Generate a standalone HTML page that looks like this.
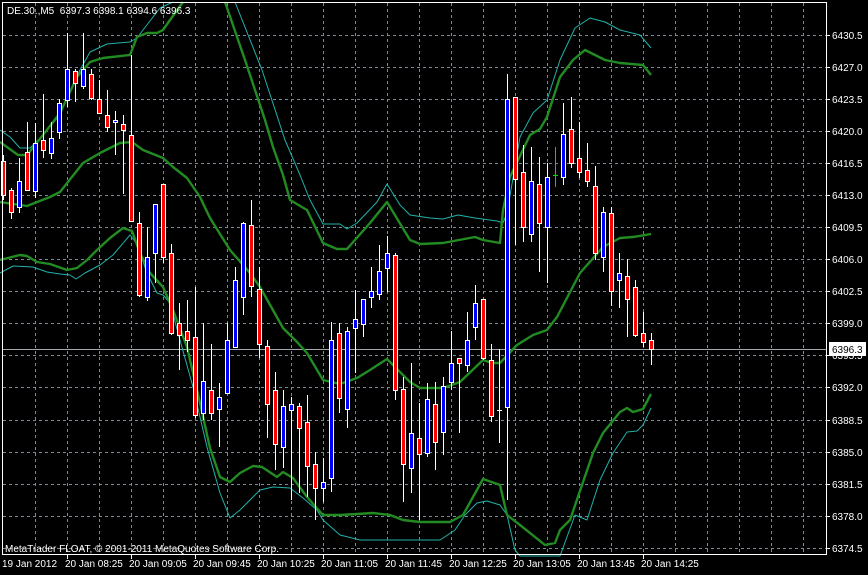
<!DOCTYPE html>
<html><head><meta charset="utf-8"><style>
html,body{margin:0;padding:0;background:#000;width:868px;height:575px;overflow:hidden}
svg{display:block}
text{font-family:"Liberation Sans",sans-serif;font-size:10px;fill:#fff}
</style></head><body>
<svg width="868" height="575" viewBox="0 0 868 575" xmlns="http://www.w3.org/2000/svg">
<rect width="868" height="575" fill="#000"/>
<g stroke="#778899" stroke-width="1" stroke-dasharray="3,3" fill="none" shape-rendering="crispEdges">
<path d="M3 35.5H826M3 67.5H826M3 99.5H826M3 131.5H826M3 163.5H826M3 195.5H826M3 227.5H826M3 259.5H826M3 291.5H826M3 323.5H826M3 355.5H826M3 387.5H826M3 420.5H826M3 452.5H826M3 484.5H826M3 516.5H826M3 548.5H826"/>
<path d="M35.5 3V554M67.5 3V554M99.5 3V554M131.5 3V554M163.5 3V554M195.5 3V554M227.5 3V554M259.5 3V554M291.5 3V554M323.5 3V554M355.5 3V554M387.5 3V554M419.5 3V554M451.5 3V554M483.5 3V554M515.5 3V554M547.5 3V554M579.5 3V554M611.5 3V554M643.5 3V554M675.5 3V554M707.5 3V554M739.5 3V554M771.5 3V554M803.5 3V554"/>
</g>
<line x1="3" y1="349.5" x2="826" y2="349.5" stroke="#a0a8b0" stroke-width="1"/>
<!-- bands -->
<g fill="none" stroke-linejoin="round">
<polyline stroke="#20b2aa" stroke-width="1" points="0,130 10,137 20,148 30,148 43,135 60,115 80,70 90,52 107,44 130,42 137,38 143,30 160,8 173,2"/>
<polyline stroke="#20b2aa" stroke-width="1" points="235,2 262,70 285,140 300,175 310,200 323,224 340,224 347,229 357,223 377,202 387,184 400,205 410,215 430,218 443,219 458,215 475,218 497,221 503,223 507,213 520,137 533,113 547,100 560,60 575,28 590,18 605,22 620,30 640,35 651,48"/>
<polyline stroke="#20b2aa" stroke-width="1" points="0,273 13,266 33,267 47,272 60,274 70,275 76,279 85,273 100,265 113,255 130,235 137,244 147,273 157,293 163,295 170,303 180,340 193,387 207,447 220,493 230,518 240,510 260,490 273,487 290,488 303,498 317,510 323,520 340,535 360,540 440,540 455,530 465,515 477,503 487,501 500,505 507,515 515,550 520,556 560,556 575,515 587,520 600,480 613,453 627,432 637,431 643,425 651,408"/>
<polyline stroke="#228b22" stroke-width="2.4" points="0,142 18,155 27,155 43,135 60,113 77,77 90,62 103,58 130,55 137,37 147,33 157,33 163,30 170,20 183,2"/>
<polyline stroke="#228b22" stroke-width="2.4" points="225,2 245,60 265,120 273,147 283,175 290,200 307,210 323,243 337,249 347,249 370,223 387,202 410,240 420,244 443,243 475,237 483,240 500,243 503,210 510,177 530,135 540,129 547,117 560,77 573,60 585,50 605,60 620,63 643,65 651,75"/>
<polyline stroke="#228b22" stroke-width="2.4" points="0,202 27,206 50,197 60,192 83,163 100,153 120,143 132,142 143,150 163,158 173,167 187,178 200,197 210,218 230,250 250,273 260,287 283,328 297,342 307,353 323,380 340,384 357,378 370,370 387,359 410,382 420,388 443,388 460,382 483,360 492,363 500,363 517,345 533,335 547,330 557,317 580,273 603,247 620,238 633,237 651,234"/>
<polyline stroke="#228b22" stroke-width="2.4" points="0,260 20,255 27,256 37,262 50,264 67,270 77,268 87,260 97,250 110,238 123,228 132,231 140,253 150,273 163,287 173,310 187,347 200,403 210,448 220,477 230,482 240,473 253,466 262,467 277,477 283,472 293,478 307,497 323,515 340,515 357,514 373,513 390,515 403,520 420,522 450,522 463,515 483,479 500,485 507,515 520,525 545,545 555,543 560,530 570,520 593,453 603,433 620,412 627,408 633,412 643,409 651,394"/>
</g>
<!-- candles -->
<g stroke="#fff" stroke-width="1" shape-rendering="crispEdges">
<path fill="none" d="M3.5 155V200M11.5 188V219M19.5 158V213M27.5 122V190M35.5 123V198M43.5 94V158M51.5 122V159M59.5 99V139M67.5 33V107M75.5 69V102M83.5 33V89M91.5 69V100M99.5 80V113M107.5 90V132M115.5 111V155M123.5 115V194M131.5 55V221M139.5 212V297M147.5 227V301M155.5 204V283M163.5 184V263M171.5 244V335M179.5 303V370M187.5 300V352M195.5 287V418M203.5 323V420M211.5 344V420M219.5 383V447M227.5 323V393M235.5 267V347M243.5 222V315M251.5 200V297M259.5 267V358M267.5 340V438M275.5 372V470M283.5 390V468M291.5 397V500M299.5 403V493M307.5 395V497M315.5 452V520M323.5 458V502M331.5 322V492M339.5 323V413M347.5 327V428M355.5 290V373M363.5 299V337M371.5 267V308M379.5 245V300M387.5 236V292M395.5 253V400M403.5 377V502M411.5 363V493M419.5 403V520M427.5 383V457M435.5 382V470M443.5 377V455M451.5 331V390M459.5 358V433M467.5 312V372M475.5 285V340M483.5 299V360M491.5 344V422M499.5 349V443M507.5 74V500M515.5 97V245M523.5 145V242M531.5 147V242M539.5 157V272M547.5 163V283M563.5 103V185M571.5 97V168M579.5 122V178M587.5 143V187M595.5 166V260M603.5 207V272M611.5 207V306M619.5 253V308M627.5 259V337M635.5 280V337M643.5 312V347M651.5 333V365"/>
<path d="M497 410.5H502" fill="none"/>
<path d="M555.5 147V187M553 175.5H558" stroke="#00e000" fill="none"/>
</g>
<g stroke="#fff" stroke-width="1" fill="#ff0000" shape-rendering="crispEdges">
<rect x="1.5" y="161.5" width="4" height="34"/>
<rect x="9.5" y="190.5" width="4" height="22"/>
<rect x="25.5" y="152.5" width="4" height="38"/>
<rect x="41.5" y="140.5" width="4" height="10"/>
<rect x="73.5" y="71.5" width="4" height="12"/>
<rect x="89.5" y="74.5" width="4" height="24"/>
<rect x="97.5" y="99.5" width="4" height="14"/>
<rect x="105.5" y="115.5" width="4" height="12"/>
<rect x="121.5" y="124.5" width="4" height="6"/>
<rect x="129.5" y="135.5" width="4" height="86"/>
<rect x="137.5" y="223.5" width="4" height="72"/>
<rect x="161.5" y="184.5" width="4" height="73"/>
<rect x="169.5" y="253.5" width="4" height="80"/>
<rect x="177.5" y="323.5" width="4" height="12"/>
<rect x="185.5" y="331.5" width="4" height="9"/>
<rect x="193.5" y="337.5" width="4" height="78"/>
<rect x="209.5" y="390.5" width="4" height="23"/>
<rect x="249.5" y="225.5" width="4" height="61"/>
<rect x="257.5" y="289.5" width="4" height="55"/>
<rect x="265.5" y="346.5" width="4" height="58"/>
<rect x="273.5" y="390.5" width="4" height="54"/>
<rect x="297.5" y="406.5" width="4" height="22"/>
<rect x="305.5" y="422.5" width="4" height="44"/>
<rect x="313.5" y="464.5" width="4" height="24"/>
<rect x="337.5" y="333.5" width="4" height="65"/>
<rect x="393.5" y="255.5" width="4" height="135"/>
<rect x="401.5" y="389.5" width="4" height="75"/>
<rect x="417.5" y="438.5" width="4" height="16"/>
<rect x="433.5" y="404.5" width="4" height="38"/>
<rect x="457.5" y="358.5" width="4" height="5"/>
<rect x="481.5" y="299.5" width="4" height="59"/>
<rect x="489.5" y="360.5" width="4" height="56"/>
<rect x="513.5" y="97.5" width="4" height="82"/>
<rect x="521.5" y="172.5" width="4" height="55"/>
<rect x="537.5" y="184.5" width="4" height="39"/>
<rect x="569.5" y="129.5" width="4" height="34"/>
<rect x="577.5" y="158.5" width="4" height="14"/>
<rect x="585.5" y="170.5" width="4" height="11"/>
<rect x="593.5" y="186.5" width="4" height="67"/>
<rect x="609.5" y="213.5" width="4" height="78"/>
<rect x="625.5" y="276.5" width="4" height="23"/>
<rect x="633.5" y="287.5" width="4" height="48"/>
<rect x="641.5" y="333.5" width="4" height="9"/>
<rect x="649.5" y="340.5" width="4" height="9"/>
</g>
<g stroke="#fff" stroke-width="1" fill="#0000ff" shape-rendering="crispEdges">
<rect x="17.5" y="181.5" width="4" height="26"/>
<rect x="33.5" y="143.5" width="4" height="48"/>
<rect x="49.5" y="138.5" width="4" height="15"/>
<rect x="57.5" y="103.5" width="4" height="29"/>
<rect x="65.5" y="69.5" width="4" height="31"/>
<rect x="81.5" y="69.5" width="4" height="17"/>
<rect x="113.5" y="120.5" width="4" height="2"/>
<rect x="145.5" y="257.5" width="4" height="40"/>
<rect x="153.5" y="204.5" width="4" height="49"/>
<rect x="201.5" y="381.5" width="4" height="32"/>
<rect x="217.5" y="397.5" width="4" height="12"/>
<rect x="225.5" y="340.5" width="4" height="53"/>
<rect x="233.5" y="280.5" width="4" height="67"/>
<rect x="241.5" y="223.5" width="4" height="74"/>
<rect x="281.5" y="406.5" width="4" height="41"/>
<rect x="289.5" y="404.5" width="4" height="6"/>
<rect x="321.5" y="482.5" width="4" height="6"/>
<rect x="329.5" y="340.5" width="4" height="138"/>
<rect x="345.5" y="331.5" width="4" height="78"/>
<rect x="353.5" y="319.5" width="4" height="9"/>
<rect x="361.5" y="299.5" width="4" height="25"/>
<rect x="369.5" y="291.5" width="4" height="6"/>
<rect x="377.5" y="271.5" width="4" height="23"/>
<rect x="385.5" y="253.5" width="4" height="15"/>
<rect x="409.5" y="433.5" width="4" height="35"/>
<rect x="425.5" y="399.5" width="4" height="54"/>
<rect x="441.5" y="386.5" width="4" height="46"/>
<rect x="449.5" y="363.5" width="4" height="19"/>
<rect x="465.5" y="340.5" width="4" height="25"/>
<rect x="473.5" y="303.5" width="4" height="24"/>
<rect x="505.5" y="99.5" width="4" height="308"/>
<rect x="529.5" y="181.5" width="4" height="53"/>
<rect x="545.5" y="177.5" width="4" height="50"/>
<rect x="561.5" y="134.5" width="4" height="43"/>
<rect x="601.5" y="212.5" width="4" height="45"/>
<rect x="617.5" y="273.5" width="4" height="7"/>
</g>
<!-- frame -->
<rect x="2.5" y="2.5" width="824" height="552" fill="none" stroke="#fff" stroke-width="1" shape-rendering="crispEdges"/>
<g stroke="#fff" shape-rendering="crispEdges">
<path d="M827 35.5H830M827 67.5H830M827 99.5H830M827 131.5H830M827 163.5H830M827 195.5H830M827 227.5H830M827 259.5H830M827 291.5H830M827 323.5H830M827 355.5H830M827 387.5H830M827 420.5H830M827 452.5H830M827 484.5H830M827 516.5H830M827 548.5H830"/>
<path d="M67.5 555V559M131.5 555V559M195.5 555V559M259.5 555V559M323.5 555V559M387.5 555V559M451.5 555V559M515.5 555V559M579.5 555V559M643.5 555V559"/>
</g>
<text x="7" y="14">DE.30.,M5&#160; 6397.3 6398.1 6394.6 6396.3</text>
<text x="5" y="552">MetaTrader FLOAT, © 2001-2011 MetaQuotes Software Corp.</text>
<g>
<text x="832" y="39">6430.5</text>
<text x="832" y="71">6427.0</text>
<text x="832" y="103">6423.5</text>
<text x="832" y="135">6420.0</text>
<text x="832" y="167">6416.5</text>
<text x="832" y="199">6413.0</text>
<text x="832" y="231">6409.5</text>
<text x="832" y="263">6406.0</text>
<text x="832" y="295">6402.5</text>
<text x="832" y="327">6399.0</text>
<text x="832" y="359">6395.5</text>
<text x="832" y="391">6392.0</text>
<text x="832" y="424">6388.5</text>
<text x="832" y="456">6385.0</text>
<text x="832" y="488">6381.5</text>
<text x="832" y="520">6378.0</text>
<text x="832" y="552">6374.5</text>
</g>
<rect x="829" y="342" width="37" height="14" fill="#fff"/>
<text x="832" y="353" style="fill:#000">6396.3</text>
<g>
<text x="2" y="567">19 Jan 2012</text>
<text x="65" y="567">20 Jan 08:25</text>
<text x="129" y="567">20 Jan 09:05</text>
<text x="193" y="567">20 Jan 09:45</text>
<text x="257" y="567">20 Jan 10:25</text>
<text x="321" y="567">20 Jan 11:05</text>
<text x="385" y="567">20 Jan 11:45</text>
<text x="449" y="567">20 Jan 12:25</text>
<text x="513" y="567">20 Jan 13:05</text>
<text x="577" y="567">20 Jan 13:45</text>
<text x="641" y="567">20 Jan 14:25</text>
</g>
</svg>
</body></html>
